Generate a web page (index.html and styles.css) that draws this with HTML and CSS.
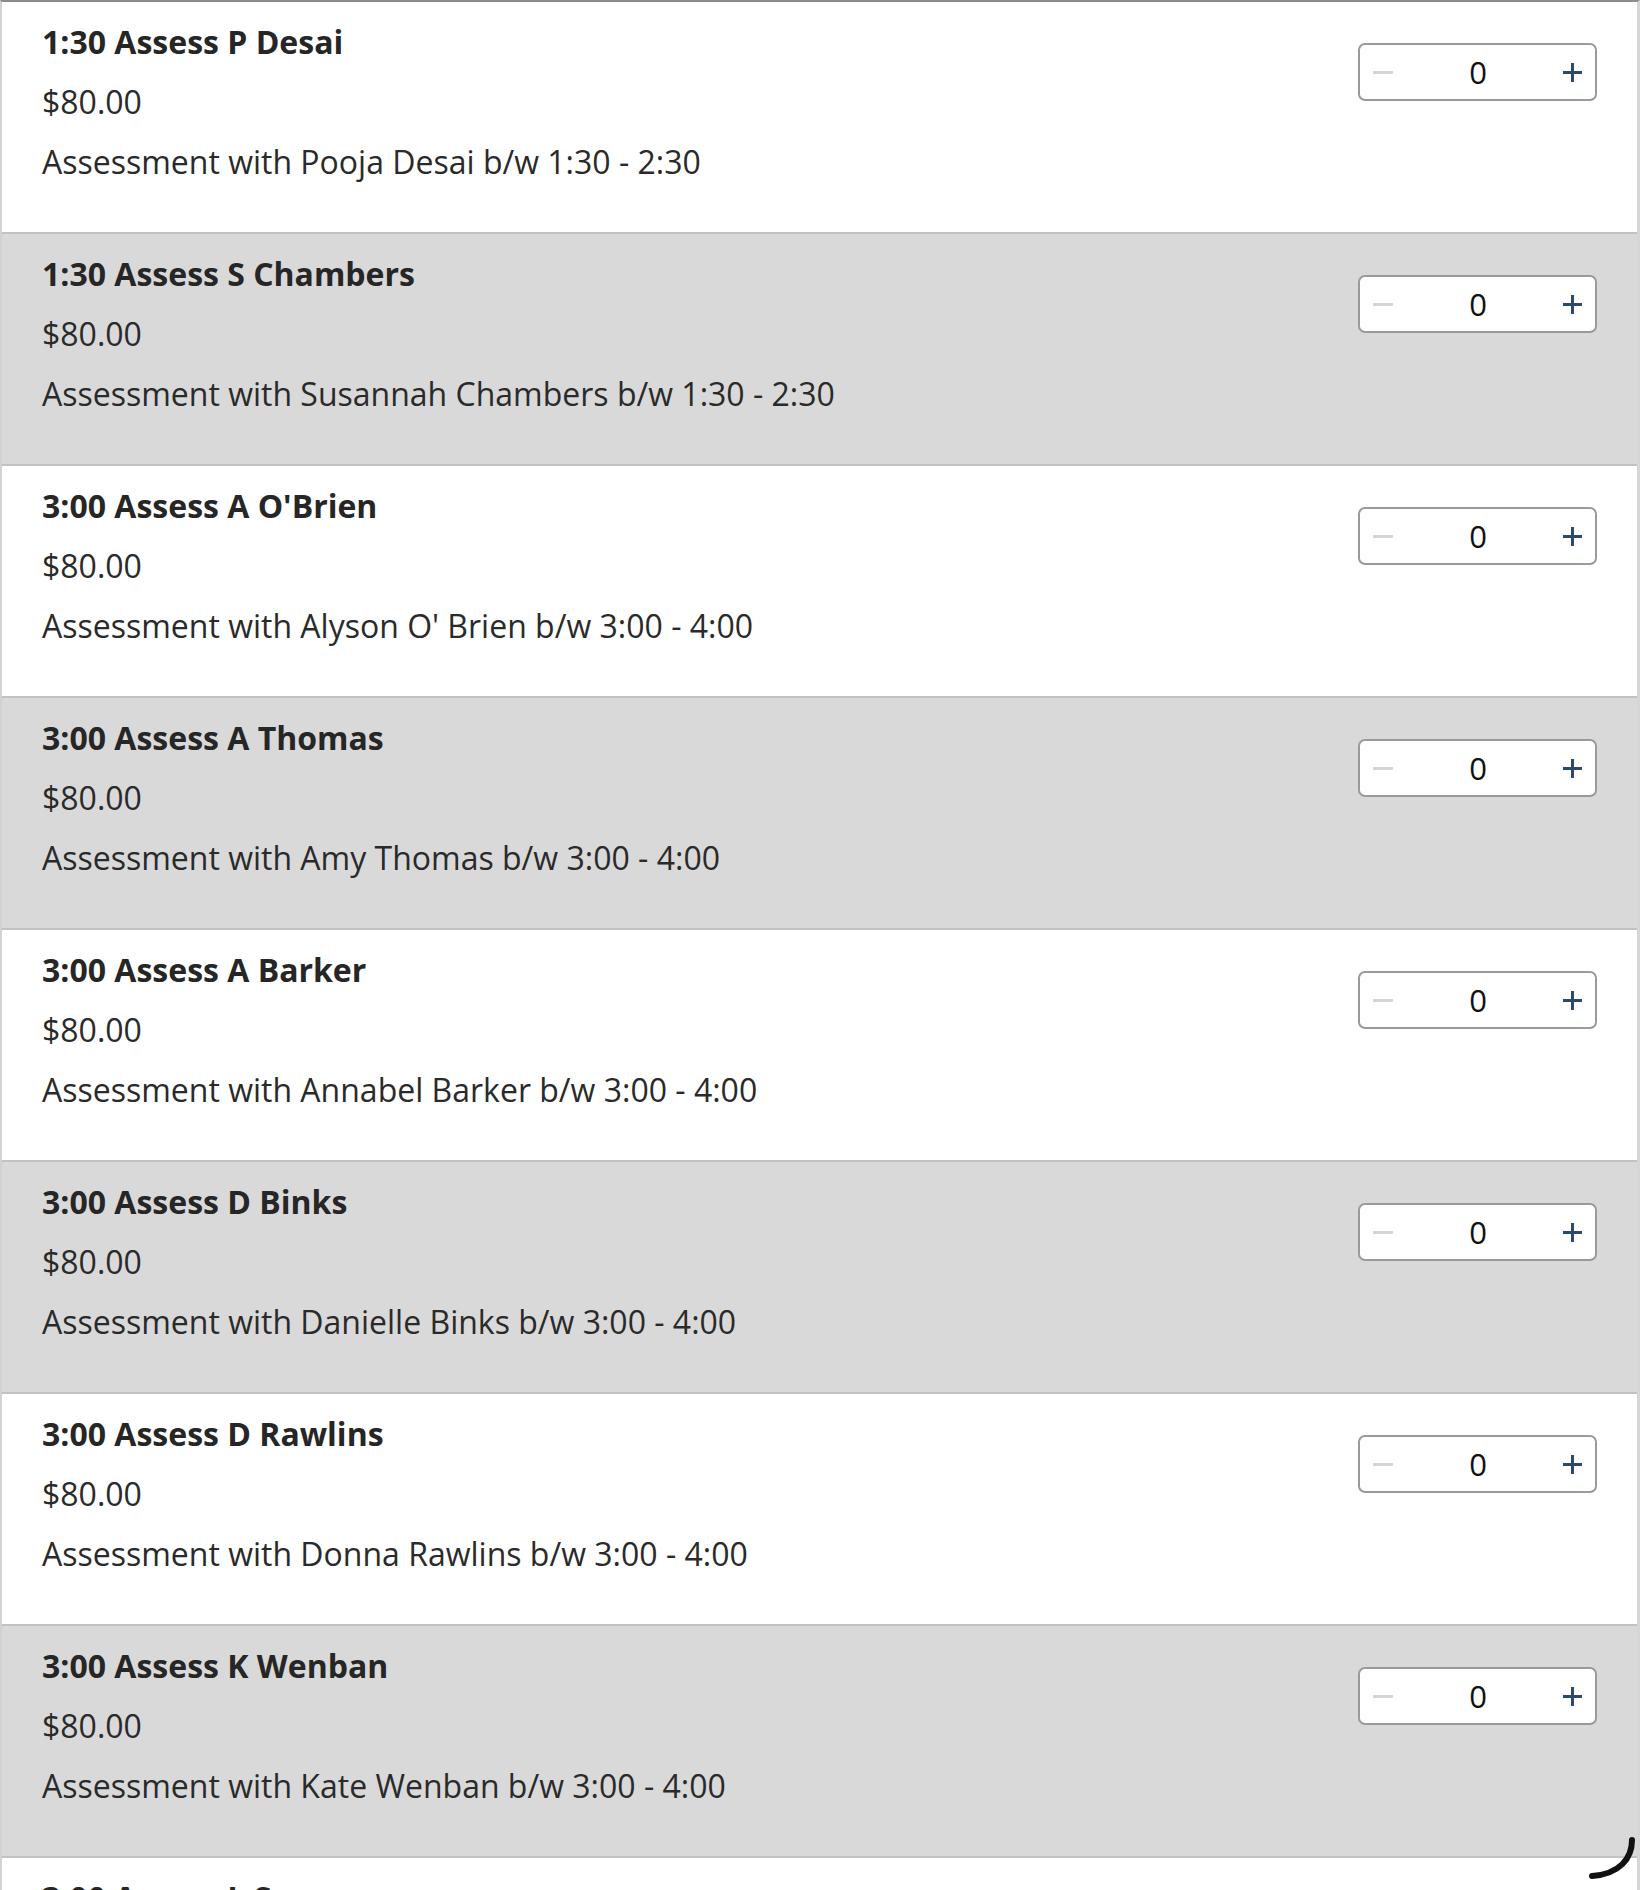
FILE: index.html
```html
<!DOCTYPE html>
<html lang="en">
<head>
<meta charset="utf-8">
<title>Assessments</title>
<link rel="stylesheet" href="styles.css">
</head>
<body>
<div class="list">
  <div class="row">
    <div class="info">
      <div class="title">1:30 Assess P Desai</div>
      <div class="price">$80.00</div>
      <div class="desc">Assessment with Pooja Desai b/w 1:30 - 2:30</div>
    </div>
    <div class="stepper"><span class="minus"></span><span class="qty">0</span><span class="plus"></span></div>
  </div>
  <div class="row alt">
    <div class="info">
      <div class="title">1:30 Assess S Chambers</div>
      <div class="price">$80.00</div>
      <div class="desc">Assessment with Susannah Chambers b/w 1:30 - 2:30</div>
    </div>
    <div class="stepper"><span class="minus"></span><span class="qty">0</span><span class="plus"></span></div>
  </div>
  <div class="row">
    <div class="info">
      <div class="title">3:00 Assess A O'Brien</div>
      <div class="price">$80.00</div>
      <div class="desc">Assessment with Alyson O' Brien b/w 3:00 - 4:00</div>
    </div>
    <div class="stepper"><span class="minus"></span><span class="qty">0</span><span class="plus"></span></div>
  </div>
  <div class="row alt">
    <div class="info">
      <div class="title">3:00 Assess A Thomas</div>
      <div class="price">$80.00</div>
      <div class="desc">Assessment with Amy Thomas b/w 3:00 - 4:00</div>
    </div>
    <div class="stepper"><span class="minus"></span><span class="qty">0</span><span class="plus"></span></div>
  </div>
  <div class="row">
    <div class="info">
      <div class="title">3:00 Assess A Barker</div>
      <div class="price">$80.00</div>
      <div class="desc">Assessment with Annabel Barker b/w 3:00 - 4:00</div>
    </div>
    <div class="stepper"><span class="minus"></span><span class="qty">0</span><span class="plus"></span></div>
  </div>
  <div class="row alt">
    <div class="info">
      <div class="title">3:00 Assess D Binks</div>
      <div class="price">$80.00</div>
      <div class="desc">Assessment with Danielle Binks b/w 3:00 - 4:00</div>
    </div>
    <div class="stepper"><span class="minus"></span><span class="qty">0</span><span class="plus"></span></div>
  </div>
  <div class="row">
    <div class="info">
      <div class="title">3:00 Assess D Rawlins</div>
      <div class="price">$80.00</div>
      <div class="desc">Assessment with Donna Rawlins b/w 3:00 - 4:00</div>
    </div>
    <div class="stepper"><span class="minus"></span><span class="qty">0</span><span class="plus"></span></div>
  </div>
  <div class="row alt">
    <div class="info">
      <div class="title">3:00 Assess K Wenban</div>
      <div class="price">$80.00</div>
      <div class="desc">Assessment with Kate Wenban b/w 3:00 - 4:00</div>
    </div>
    <div class="stepper"><span class="minus"></span><span class="qty">0</span><span class="plus"></span></div>
  </div>
  <div class="row">
    <div class="info">
      <div class="title">3:00 Assess L S</div>
    </div>
  </div>
</div>
<svg class="spinner" width="60" height="60" viewBox="0 0 60 60" aria-hidden="true">
  <path d="M50 6 C50 24 38 40 10 42" fill="none" stroke="#111" stroke-width="6" stroke-linecap="round"/>
</svg>
</body>
</html>
```
FILE: styles.css
```css
html, body {
  margin: 0;
  padding: 0;
  background: #ffffff;
  overflow: hidden;
}
body {
  width: 1640px;
  height: 1890px;
  font-family: "Open Sans", "Noto Sans", sans-serif;
  color: #2a2a2a;
}
.list {
  border-top: 2px solid #8c8c8c;
  border-left: 2px solid #d2d2d2;
  border-right: 3px solid #d6d6d6;
}
.row {
  display: flex;
  justify-content: space-between;
  align-items: flex-start;
  height: 230px;
  border-bottom: 2px solid #c2c2c2;
  padding: 0 40px 0 40px;
  box-sizing: content-box;
  background: #ffffff;
}
.row.alt {
  background: #d9d9d9;
}
.info {
  padding-top: 10px;
}
.title {
  font-weight: 700;
  font-size: 32px;
  line-height: 60px;
  color: #262626;
}
.price, .desc {
  font-size: 32px;
  line-height: 60px;
  color: #2a2a2a;
}
.stepper {
  margin-top: 41px;
  width: 239px;
  height: 58px;
  box-sizing: border-box;
  border: 2px solid #9a9a9a;
  border-radius: 7px;
  background: #ffffff;
  display: flex;
  align-items: center;
  justify-content: space-between;
  padding: 0 13px 0 13px;
}
.minus {
  width: 20px;
  height: 3px;
  background: #d4d4d4;
}
.qty {
  font-size: 31px;
  color: #111;
  line-height: 1;
}
.plus {
  position: relative;
  width: 19px;
  height: 19px;
}
.plus::before, .plus::after {
  content: "";
  position: absolute;
  background: #2b4a6d;
}
.plus::before {
  left: 0;
  top: 8px;
  width: 19px;
  height: 3px;
}
.plus::after {
  left: 8px;
  top: 0;
  width: 3px;
  height: 19px;
}
.spinner {
  position: absolute;
  left: 1582px;
  top: 1834px;
}
```
